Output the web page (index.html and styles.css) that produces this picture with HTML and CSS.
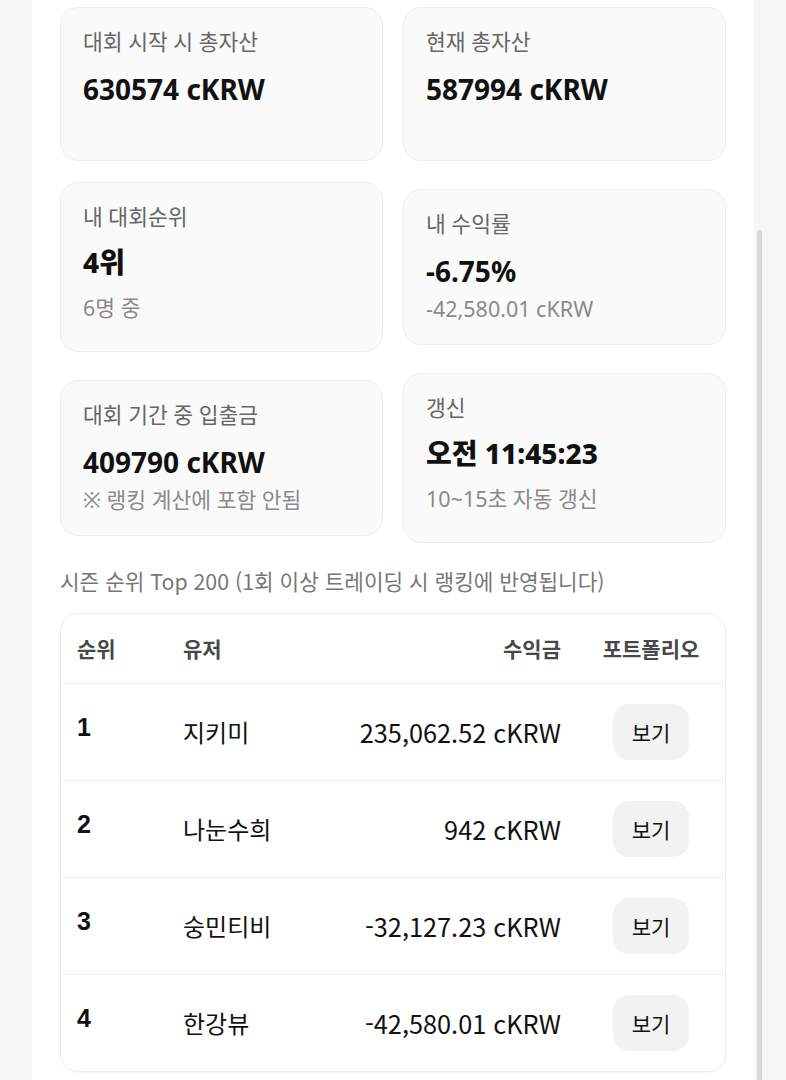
FILE: index.html
```html
<!DOCTYPE html>
<html lang="ko">
<head>
<meta charset="utf-8">
<title>대회 순위</title>
<link rel="stylesheet" href="styles.css">
</head>
<body>
<div class="page">
  <main class="panel">
    <section class="stats">
      <div class="card card-short">
        <div class="label">대회 시작 시 총자산</div>
        <div class="value">630574 cKRW</div>
      </div>
      <div class="card card-short">
        <div class="label">현재 총자산</div>
        <div class="value">587994 cKRW</div>
      </div>
      <div class="card card-tall">
        <div class="label">내 대회순위</div>
        <div class="value value-ko">4위</div>
        <div class="sub">6명 중</div>
      </div>
      <div class="card">
        <div class="label">내 수익률</div>
        <div class="value">-6.75%</div>
        <div class="sub">-42,580.01 cKRW</div>
      </div>
      <div class="card">
        <div class="label">대회 기간 중 입출금</div>
        <div class="value">409790 cKRW</div>
        <div class="sub">※ 랭킹 계산에 포함 안됨</div>
      </div>
      <div class="card card-tall">
        <div class="label">갱신</div>
        <div class="value value-ko">오전 11:45:23</div>
        <div class="sub">10~15초 자동 갱신</div>
      </div>
    </section>

    <h2 class="section-title">시즌 순위 Top 200 (1회 이상 트레이딩 시 랭킹에 반영됩니다)</h2>

    <section class="table">
      <div class="row head">
        <div class="c-rank">순위</div>
        <div class="c-user">유저</div>
        <div class="c-amt">수익금</div>
        <div class="c-pf">포트폴리오</div>
      </div>
      <div class="row">
        <div class="c-rank">1</div>
        <div class="c-user">지키미</div>
        <div class="c-amt">235,062.52 cKRW</div>
        <div class="c-pf"><button class="btn">보기</button></div>
      </div>
      <div class="row">
        <div class="c-rank">2</div>
        <div class="c-user">나눈수희</div>
        <div class="c-amt">942 cKRW</div>
        <div class="c-pf"><button class="btn">보기</button></div>
      </div>
      <div class="row">
        <div class="c-rank">3</div>
        <div class="c-user">숭민티비</div>
        <div class="c-amt">-32,127.23 cKRW</div>
        <div class="c-pf"><button class="btn">보기</button></div>
      </div>
      <div class="row last">
        <div class="c-rank">4</div>
        <div class="c-user">한강뷰</div>
        <div class="c-amt">-42,580.01 cKRW</div>
        <div class="c-pf"><button class="btn">보기</button></div>
      </div>
    </section>
  </main>
  <div class="scroll"><div class="thumb"></div></div>
</div>
</body>
</html>
```

FILE: styles.css
```css
* { box-sizing: border-box; }
html, body {
  margin: 0;
  height: 1080px;
  overflow: hidden;
  background: #f6f6f6;
  font-family: "Noto Sans", "Noto Sans CJK KR", sans-serif;
  color: #111;
}
.page {
  display: flex;
  height: 1080px;
}
.panel {
  margin-left: 32px;
  width: 722px;
  background: #fff;
  padding: 7px 28px 0;
}
.scroll {
  width: 8px;
  padding-left: 3px;
  padding-top: 230px;
}
.thumb {
  width: 5px;
  height: 900px;
  background: #d9d9d9;
  border-radius: 3px 3px 0 0;
}
.stats {
  display: grid;
  grid-template-columns: 1fr 1fr;
  column-gap: 20px;
  row-gap: 21px;
  align-items: center;
}
.card {
  background: #fafafa;
  border: 1px solid #eeeeee;
  border-radius: 18px;
  padding: 20px 22px 21px;
  min-height: 154px;
}
.label {
  font-size: 21.5px;
  line-height: 28px;
  color: #666;
}
.value {
  margin-top: 15px;
  font-size: 28px;
  line-height: 36px;
  font-weight: 700;
  color: #111;
}
.sub {
  margin-top: 6px;
  font-size: 21.5px;
  line-height: 28px;
  color: #8a8a8a;
}
.card-tall { padding-bottom: 29px; }
.card-tall .value { margin-top: 7px; line-height: 48px; font-weight: 800; }
.card-tall .sub { margin-top: 8px; }

.section-title {
  margin: 21px 0 0;
  font-family: "Noto Sans CJK KR", sans-serif;
  font-weight: 400;
  font-size: 21.3px;
  line-height: 34px;
  color: #777;
}
.table {
  margin-top: 15px;
  border: 1px solid #ececec;
  border-radius: 18px;
  overflow: hidden;
  font-family: "Noto Sans CJK KR", sans-serif;
  box-shadow: 0 1px 2px rgba(0,0,0,0.04);
}
.row {
  display: grid;
  grid-template-columns: 106px 1fr 260px 116px;
  align-items: center;
  padding: 20px 16px;
  border-bottom: 1px solid #efefef;
  font-size: 24px;
  line-height: 36px;
  color: #111;
  white-space: nowrap;
}
.row.last { border-bottom: none; }
.row.head {
  padding: 16px 16px 17px;
  font-weight: 700;
  font-size: 21px;
  color: #484848;
  line-height: 36px;
}
.c-rank {
  font-family: "Liberation Sans", "Noto Sans CJK KR", sans-serif;
  font-weight: 700;
  padding-bottom: 10px;
  font-size: 25px;
}
.head .c-rank {
  font-family: "Noto Sans CJK KR", sans-serif;
  padding-bottom: 0;
  font-size: 21px;
}
.c-amt { text-align: right; padding-right: 32px; font-size: 25.3px; }
.head .c-amt { font-size: 21px; }
.c-pf { display: flex; justify-content: center; }
.btn {
  width: 76px;
  height: 56px;
  border: none;
  border-radius: 16px;
  background: #f2f2f2;
  font-family: "Noto Sans CJK KR", sans-serif;
  font-size: 21px;
  color: #111;
  padding: 0;
}
```
